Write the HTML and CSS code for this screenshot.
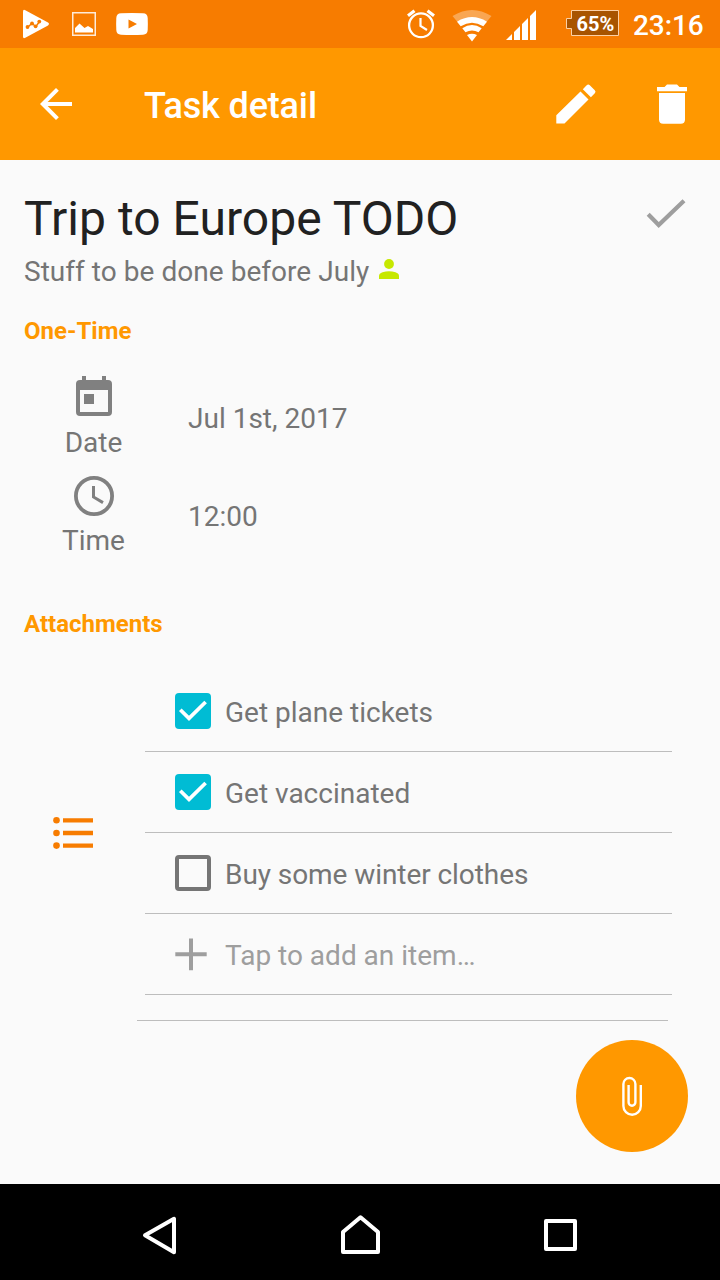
FILE: index.html
```html
<!DOCTYPE html>
<html lang="en">
<head>
<meta charset="utf-8">
<title>Task detail</title>
<link rel="stylesheet" href="styles.css">
</head>
<body>
<div class="screen">
  <header class="status">
    <div class="status-left">
      <svg width="28" height="48" viewBox="22 0 28 48"><path d="M23 11.500Q23 9 25.300 10.200L48 22.600Q50 24 48 25.400L25.300 37.800Q23 39 23 36.500Z" fill="#fff"/><path d="M28 27L32 23.300L35.800 26.700L39.500 21.500" fill="none" stroke="#f77c00" stroke-width="1.500"/><g fill="#f77c00"><circle cx="27.500" cy="27" r="1.900"/><circle cx="32" cy="23.500" r="1.900"/><circle cx="35.600" cy="26.300" r="1.900"/><circle cx="39.300" cy="21.600" r="1.900"/></g></svg>
      <svg width="24" height="48" viewBox="72 0 24 48"><rect x="72.750" y="12.750" width="22.500" height="22.500" fill="none" stroke="#fff" stroke-opacity=".85" stroke-width="1.500"/><path d="M75 32.500V28L79.500 23.500L84.500 28L88 26L93 29V32.500Z" fill="#fff"/></svg>
      <svg width="32" height="48" viewBox="116 0 32 48"><path fill-rule="evenodd" d="M121 13.300Q132 12.700 143 13.300Q147.500 13.500 147.700 18Q148 24 147.700 30Q147.500 34.500 143 34.700Q132 35.300 121 34.700Q116.500 34.500 116.300 30Q116 24 116.300 18Q116.500 13.500 121 13.300ZM128.500 19.500V28.500L137 24Z" fill="#fff"/></svg>
    </div>
    <div class="status-right">
      <svg width="28" height="48" viewBox="407 0 28 48" fill="none" stroke="#fff"><circle cx="421" cy="25.300" r="11.900" stroke-width="2.300"/><path d="M420.500 18V26L427 30" stroke-width="2.200"/><path d="M408 15.800L414.500 10.800M434 15.800L427.500 10.800" stroke-width="3.200"/></svg>
      <svg class="wifi" width="40" height="48" viewBox="452 0 40 48" fill="#fff"><path d="M452.500 16Q472 4 491.500 16L486.500 22Q472 13 457.500 22Z" opacity=".32"/><path d="M457 21.700Q472 12.500 487 21.700L483.300 26.300Q472 19 460.700 26.300Z"/><path d="M462.300 28.200Q472 22 481.700 28.200L478.500 32.300Q472 28.500 465.500 32.300Z"/><path d="M467 35Q472 32.500 477 35L472 41.500Z"/></svg>
      <svg class="signal" width="30" height="48" viewBox="506 0 30 48" fill="#fff"><path d="M506 40L512 34V40ZM514 40V32L520 26V40ZM522 40V24L528 18V40ZM530 40V16L536 10V40Z"/></svg>
      <div class="battery">
        <svg width="54" height="48" viewBox="566 0 54 48"><path d="M571.500 10.500H618.500V35.500H571.500V28.500H566.500V18.500H571.500Z" fill="#a85400" stroke="#fcd0a4"/></svg>
        <span class="battery-text">65%</span>
      </div>
      <span class="clock">23:16</span>
    </div>
  </header>

  <div class="appbar">
    <svg width="48" height="48" viewBox="0 0 24 24"><path fill="#fff" d="M20 11H7.830l5.590-5.590L12 4l-8 8 8 8 1.410-1.410L7.830 13H20z"/></svg>
    <h1 class="appbar-title">Task detail</h1>
    <svg width="42" height="42" viewBox="555 83 42 42" fill="#fff"><path d="M556.300 123.500V115.300L580.500 91.500L588.500 99.500L564.500 123.500ZM582.800 89.200L586.700 85.200Q588.200 83.800 589.800 85.200L594.800 90.200Q596.300 91.800 594.800 93.300L590.900 97.300Z"/></svg>
    <svg class="trash" width="32" height="42" viewBox="656 83 32 42" fill="#fff"><path d="M657 87H664.500L667 84.600H677L679.500 87H687V91.300H657ZM659 93H685V119.500Q685 123.700 680.800 123.700H663.200Q659 123.700 659 119.500Z"/></svg>
  </div>

  <main class="content">
    <div class="heading">
      <h2 class="title">Trip to Europe TODO</h2>
      <svg class="done" width="40" height="32" viewBox="646 198 40 32"><path d="M648.200 214.200L658.700 225L684 200.700" fill="none" stroke="#9e9e9e" stroke-width="4.200"/></svg>
    </div>
    <p class="subtitle">Stuff to be done before July
      <svg class="person" width="20" height="20" viewBox="0 0 20 20" fill="#c6e800"><circle cx="10" cy="5" r="4.900"/><path d="M0 20V17Q0 14.500 3.500 13.300Q10 11.300 16.500 13.300Q20 14.500 20 17V20Z"/></svg>
    </p>
    <h3 class="section">One-Time</h3>
    <div class="row">
      <div class="label">
        <svg width="40" height="40" viewBox="0 0 40 40" fill="#808080"><path fill-rule="evenodd" d="M8 0H12V4H28V0H32V4H34Q38 4 38 8V36Q38 40 34 40H6Q2 40 2 36V8Q2 4 6 4H8ZM6 14V36H34V14Z"/><path d="M10 18H20V28H10Z"/></svg>
        <span class="caption">Date</span>
      </div>
      <span class="value">Jul 1st, 2017</span>
    </div>
    <div class="row row-time">
      <div class="label">
        <svg width="40" height="40" viewBox="0 0 40 40" fill="none" stroke="#808080"><circle cx="20" cy="20" r="18.100" stroke-width="3.800"/><path d="M19.500 10V21L29 26.600" stroke-width="3"/></svg>
        <span class="caption">Time</span>
      </div>
      <span class="value">12:00</span>
    </div>
    <h3 class="section section-files">Attachments</h3>
    <div class="attachment">
      <svg class="bullets" width="40" height="34" viewBox="53 816 40 34" fill="#f77c00"><circle cx="56.500" cy="820.300" r="3.300"/><circle cx="56.500" cy="833" r="3.300"/><circle cx="56.500" cy="845.600" r="3.300"/><path d="M63 818.200H93V822.500H63ZM63 830.800H93V835.200H63ZM63 843.500H93V847.800H63Z"/></svg>
      <ul class="list">
        <li class="item"><svg class="box checked" width="36" height="36" viewBox="0 0 36 36"><path d="M5.300 16.800L14 25.400L30.600 9" fill="none" stroke="#fff" stroke-width="3.700"/></svg><span class="item-text">Get plane tickets</span></li>
        <li class="item"><svg class="box checked" width="36" height="36" viewBox="0 0 36 36"><path d="M5.300 16.800L14 25.400L30.600 9" fill="none" stroke="#fff" stroke-width="3.700"/></svg><span class="item-text">Get vaccinated</span></li>
        <li class="item"><span class="box empty"></span><span class="item-text tight">Buy some winter clothes</span></li>
        <li class="item add"><svg class="box" width="36" height="36" viewBox="0 0 36 36"><path d="M.300 18H31.700M16 2.300V34" transform="translate(0 .2)" fill="none" stroke="#9e9e9e" stroke-width="4"/></svg><span class="item-text">Tap to add an item…</span></li>
      </ul>
    </div>
    <div class="divider"></div>
    <button class="fab" aria-label="Add attachment">
      <svg width="22" height="42" viewBox="621 1075 22 42"><path d="M640.800 1085V1106A8.700 8.700 0 0 1 623.400 1106V1084A6 6 0 0 1 635.400 1084V1102.300A3.400 3.400 0 0 1 628.600 1102.300V1085" fill="none" stroke="#fff" stroke-width="2.400"/></svg>
    </button>
  </main>

  <nav class="nav" aria-label="System">
    <svg width="36" height="40" viewBox="142 1215 36 40"><path d="M145 1235.300L174 1218.800V1252.300Z"/></svg>
    <svg width="40" height="40" viewBox="340 1215 40 40"><path d="M343 1232L360.500 1217.200L378 1232V1252H343Z"/></svg>
    <svg width="36" height="36" viewBox="542 1217 36 36"><path d="M546 1221H575V1249H546Z"/></svg>
  </nav>
</div>
</body>
</html>
```

FILE: styles.css
```css
* { box-sizing: border-box; margin: 0; padding: 0; }
body { font-family: Roboto, "Noto Sans", sans-serif; background: #fafafa; }
svg { display: block; flex: none; }
.screen { display: flex; flex-direction: column; width: 720px; height: 1280px; overflow: hidden; }
.status { display: flex; justify-content: space-between; height: 48px; padding: 0 16px 0 22px; background: #f77c00; }
.status-left { display: flex; }
.status-left svg:nth-child(2) { margin-left: 22px; }
.status-left svg:nth-child(3) { margin-left: 20px; }
.status-right { display: flex; }
.wifi { margin-left: 17px; }
.signal { margin-left: 14px; }
.battery { display: grid; width: 54px; margin-left: 30px; }
.battery > * { grid-area: 1 / 1; }
.battery-text { padding-left: 10.5px; color: #fff; font-size: 20px; font-weight: 700; line-height: 48px; white-space: nowrap; }
.clock { width: 71px; margin-left: 13px; color: #fff; font-size: 28px; font-weight: 500; line-height: 52px; letter-spacing: -.1px; white-space: nowrap; }
.appbar { display: flex; align-items: center; height: 112px; padding: 0 32px; background: #ff9800; color: #fff; }
.appbar-title { flex: 1; padding: 4px 0 0 64px; font-size: 36px; font-weight: 500; line-height: 44px; letter-spacing: -.15px; }
.trash { margin-left: 59px; }
.content { position: relative; height: 1024px; padding: 30px 24px 0; color: #757575; font-size: 28px; line-height: 33px; }
.heading { display: flex; justify-content: space-between; height: 65px; }
.title { color: #212121; font-size: 48px; font-weight: 400; line-height: 57px; letter-spacing: .04px; }
.done { margin: 8px 10px 0 0; }
.subtitle { display: flex; gap: 10px; height: 62px; letter-spacing: .04px; }
.person { margin-top: 4px; }
.section { height: 59px; color: #ff9800; font-size: 24px; font-weight: 700; line-height: 28px; }
.row { display: flex; align-items: center; height: 83px; }
.row-time { height: 81px; margin-top: 17px; }
.label { display: flex; flex-direction: column; align-items: center; width: 140px; gap: 10px; }
.row-time .label { gap: 8px; }
.caption { padding-right: 1px; }
.value { padding: 2px 0 0 24px; }
.row-time .value { padding-top: 0; }
.section-files { margin-top: 53px; height: 61px; }
.attachment { display: flex; }
.bullets { margin: 145px 52px 0 29px; }
.list { width: 527px; list-style: none; }
.item { display: flex; align-items: center; gap: 14px; height: 81px; padding-left: 30px; border-bottom: 1px solid #bdbdbd; }
.item-text { padding-top: 2px; }
.tight { letter-spacing: -.07px; }
.box { width: 36px; height: 36px; border-radius: 4px; }
.checked { background: #00bcd4; }
.empty { border: 4px solid #757575; }
.add { color: #9e9e9e; }
.divider { width: 531px; margin: 25px 0 0 113px; border-top: 1px solid #bdbdbd; }
.fab { position: absolute; right: 32px; bottom: 32px; display: flex; align-items: center; justify-content: center; width: 112px; height: 112px; border: 0; border-radius: 50%; background: #ff9800; }
.nav { display: flex; align-items: center; justify-content: space-between; height: 96px; padding: 6px 142px 0; background: #000; }
.nav path { fill: none; stroke: #fff; stroke-width: 4; stroke-linejoin: round; }
```
